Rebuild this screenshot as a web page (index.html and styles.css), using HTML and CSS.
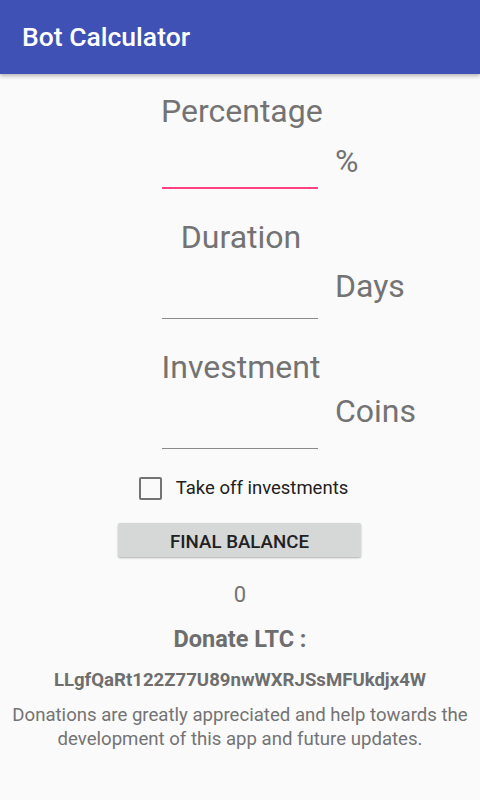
FILE: index.html
```html
<!DOCTYPE html>
<html>
<head>
<meta charset="utf-8">
<link rel="stylesheet" href="styles.css">
</head>
<body>
<header class="appbar">
  <h1 class="title">Bot Calculator</h1>
</header>
<main class="content">
  <div class="row row-first">
    <div class="field">
      <div class="label">Percentage</div>
      <div class="input input-focused"></div>
    </div>
    <div class="unit unit-pct">%</div>
  </div>
  <div class="row">
    <div class="field">
      <div class="label">Duration</div>
      <div class="input"></div>
    </div>
    <div class="unit unit-days">Days</div>
  </div>
  <div class="row">
    <div class="field">
      <div class="label">Investment</div>
      <div class="input"></div>
    </div>
    <div class="unit unit-coins">Coins</div>
  </div>
  <label class="check">
    <span class="box"></span>
    <span class="check-text">Take off investments</span>
  </label>
  <div class="btn-wrap">
    <button class="btn">FINAL BALANCE</button>
  </div>
  <div class="result">0</div>
  <div class="donate">Donate LTC :</div>
  <div class="address">LLgfQaRt122Z77U89nwWXRJSsMFUkdjx4W</div>
  <p class="note">Donations are greatly appreciated and help towards the development of this app and future updates.</p>
</main>
</body>
</html>
```
FILE: styles.css
```css
html, body {
  margin: 0;
  padding: 0;
}
body {
  width: 480px;
  height: 800px;
  background: #fafafa;
  font-family: Roboto, "Noto Sans", "Liberation Sans", sans-serif;
  color: #757575;
  overflow: hidden;
}
.appbar {
  height: 74px;
  background: #3f51b5;
  box-shadow: 0 2px 4px rgba(0,0,0,0.28);
  display: flex;
  align-items: center;
  padding-left: 22px;
  position: relative;
  z-index: 1;
}
.title {
  margin: 0;
  color: #ffffff;
  font-size: 26.5px;
  font-weight: 500;
  line-height: 32px;
  margin-top: -1px;
}
.content {
  display: flex;
  flex-direction: column;
  padding: 0 10px;
}
.row {
  display: grid;
  grid-template-columns: 1fr 160px 1fr;
  margin-top: 28px;
  margin-left: 2px;
}
.row-first {
  margin-top: 17px;
}
.field {
  grid-column: 2;
  display: flex;
  flex-direction: column;
}
.label {
  font-size: 32px;
  line-height: 40px;
  height: 40px;
  text-align: center;
  white-space: nowrap;
  color: #737373;
}
.input {
  height: 61px;
  margin: 0 3px 0 1px;
  border-bottom: 1px solid #8a8a8a;
}
.input-focused {
  height: 56px;
  border-bottom: 2px solid #ff4081;
}
.unit {
  grid-column: 3;
  font-size: 32px;
  line-height: 40px;
  padding-left: 14px;
  color: #737373;
  white-space: nowrap;
}
.unit-pct { margin-top: 50px; }
.unit-days { margin-top: 49px; }
.unit-coins { margin-top: 44px; }
.check {
  display: flex;
  align-items: center;
  justify-content: center;
  margin-top: 27px;
  height: 24px;
  gap: 14px;
  margin-left: 7px;
}
.box {
  width: 19px;
  height: 19px;
  border: 2px solid #737373;
  border-radius: 2px;
  flex: none;
}
.check-text {
  font-size: 18.5px;
  line-height: 24px;
  color: #212121;
}
.btn-wrap {
  display: flex;
  justify-content: center;
  margin-top: 23px;
}
.btn {
  width: 243px;
  height: 34px;
  margin-left: -1px;
  border: none;
  border-radius: 2px;
  background: #d6d7d7;
  box-shadow: 0 1px 2px rgba(0,0,0,0.3);
  font-family: Roboto, "Noto Sans", "Liberation Sans", sans-serif;
  font-size: 18.7px;
  font-weight: 500;
  color: #212121;
  padding: 3px 0 0;
}
.result {
  margin-top: 25px;
  font-size: 22px;
  line-height: 26px;
  text-align: center;
  color: #737373;
}
.donate {
  margin-top: 18px;
  font-size: 23.5px;
  line-height: 26px;
  font-weight: 700;
  text-align: center;
  color: #6e6e6e;
}
.address {
  margin-top: 17px;
  font-size: 18.6px;
  line-height: 22px;
  font-weight: 700;
  text-align: center;
  color: #6e6e6e;
}
.note {
  margin: 12px 0 0;
  font-size: 18.6px;
  line-height: 24px;
  text-align: center;
  color: #737373;
}
```
